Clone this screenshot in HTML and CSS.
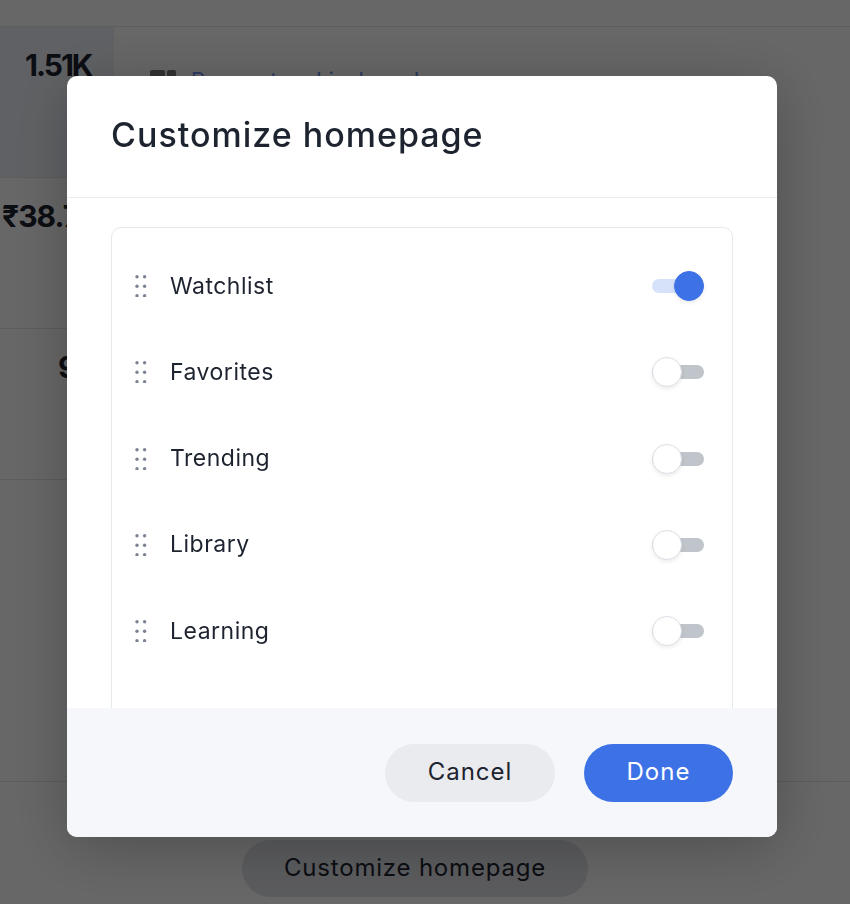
FILE: index.html
```html
<!DOCTYPE html>
<html lang="en">
<head>
    <meta charset="UTF-8">
    <meta name="viewport" content="width=device-width, initial-scale=1.0">
    <title>Customize homepage</title>
    <link rel="stylesheet" href="styles.css">
</head>
<body>
    <!-- Page behind the dialog -->
    <div class="page">
        <div class="topbar"></div>
        <div class="content">
            <div class="stats">
                <div class="stat stat-active"><span class="num num-a">1.51K</span></div>
                <div class="stat"><span class="num num-b">₹38.76M</span></div>
                <div class="stat"><span class="num num-c">9.2K</span></div>
            </div>
            <div class="list">
                <a class="link" href="#">
                    <svg class="link-icon" width="26" height="20" viewBox="0 0 26 20">
                        <rect x="0" y="0" width="15" height="20" rx="2" fill="#7a7c80"/>
                        <rect x="17" y="0" width="9" height="20" rx="2" fill="#7a7c80"/>
                    </svg>
                    Parameters Liveboard
                </a>
            </div>
        </div>
        <div class="page-footer">
            <button class="page-btn">Customize homepage</button>
        </div>
    </div>

    <!-- Dialog -->
    <div class="overlay">
        <div class="modal">
            <div class="modal-header">
                <h2>Customize homepage</h2>
            </div>
            <div class="modal-body">
                <div class="sections">
                    <div class="row">
                        <svg class="handle" width="12" height="22" viewBox="0 0 12 22"><g fill="#7b8291"><circle cx="2" cy="1.7" r="1.7"/><circle cx="9.6" cy="1.7" r="1.7"/><circle cx="2" cy="11.2" r="1.7"/><circle cx="9.6" cy="11.2" r="1.7"/><circle cx="2" cy="20.7" r="1.7"/><circle cx="9.6" cy="20.7" r="1.7"/></g></svg>
                        <span class="label">Watchlist</span>
                        <span class="toggle on"><span class="knob"></span></span>
                    </div>
                    <div class="row">
                        <svg class="handle" width="12" height="22" viewBox="0 0 12 22"><g fill="#7b8291"><circle cx="2" cy="1.7" r="1.7"/><circle cx="9.6" cy="1.7" r="1.7"/><circle cx="2" cy="11.2" r="1.7"/><circle cx="9.6" cy="11.2" r="1.7"/><circle cx="2" cy="20.7" r="1.7"/><circle cx="9.6" cy="20.7" r="1.7"/></g></svg>
                        <span class="label">Favorites</span>
                        <span class="toggle"><span class="knob"></span></span>
                    </div>
                    <div class="row">
                        <svg class="handle" width="12" height="22" viewBox="0 0 12 22"><g fill="#7b8291"><circle cx="2" cy="1.7" r="1.7"/><circle cx="9.6" cy="1.7" r="1.7"/><circle cx="2" cy="11.2" r="1.7"/><circle cx="9.6" cy="11.2" r="1.7"/><circle cx="2" cy="20.7" r="1.7"/><circle cx="9.6" cy="20.7" r="1.7"/></g></svg>
                        <span class="label">Trending</span>
                        <span class="toggle"><span class="knob"></span></span>
                    </div>
                    <div class="row">
                        <svg class="handle" width="12" height="22" viewBox="0 0 12 22"><g fill="#7b8291"><circle cx="2" cy="1.7" r="1.7"/><circle cx="9.6" cy="1.7" r="1.7"/><circle cx="2" cy="11.2" r="1.7"/><circle cx="9.6" cy="11.2" r="1.7"/><circle cx="2" cy="20.7" r="1.7"/><circle cx="9.6" cy="20.7" r="1.7"/></g></svg>
                        <span class="label">Library</span>
                        <span class="toggle"><span class="knob"></span></span>
                    </div>
                    <div class="row">
                        <svg class="handle" width="12" height="22" viewBox="0 0 12 22"><g fill="#7b8291"><circle cx="2" cy="1.7" r="1.7"/><circle cx="9.6" cy="1.7" r="1.7"/><circle cx="2" cy="11.2" r="1.7"/><circle cx="9.6" cy="11.2" r="1.7"/><circle cx="2" cy="20.7" r="1.7"/><circle cx="9.6" cy="20.7" r="1.7"/></g></svg>
                        <span class="label">Learning</span>
                        <span class="toggle"><span class="knob"></span></span>
                    </div>
                </div>
            </div>
            <div class="modal-footer">
                <button class="btn btn-secondary">Cancel</button>
                <button class="btn btn-primary">Done</button>
            </div>
        </div>
    </div>
</body>
</html>
```

FILE: styles.css
```css
/* General Styling */
* {
    margin: 0;
    padding: 0;
    box-sizing: border-box;
}

body {
    font-family: Inter, 'Noto Sans', sans-serif;
    background: #fff;
    color: #1d232f;
    width: 850px;
    height: 904px;
    overflow: hidden;
}

/* Background page */
.page {
    display: flex;
    flex-direction: column;
    height: 904px;
}

.topbar {
    height: 27px;
    border-bottom: 1px solid #e4e5e8;
}

.content {
    display: flex;
    flex: 1;
    border-bottom: 1px solid #e4e5e8;
}

.stats {
    width: 114px;
    display: flex;
    flex-direction: column;
}

.stat {
    height: 151px;
    width: 200px;
    border-bottom: 1px solid #e4e5e8;
    padding-top: 20px;
    font-size: 30px;
    font-weight: 700;
    letter-spacing: -2px;
    white-space: nowrap;
}

.stat-active {
    width: 114px;
    background: #eef1f8;
}

.num { display: block; }
.num-a { padding-left: 25px; }
.num-b { padding-left: 2px; letter-spacing: -1px; }
.num-c { padding-left: 58px; }

.list {
    padding: 40px 0 0 36px;
}

.link {
    display: flex;
    align-items: center;
    gap: 15px;
    color: #6c8ff0;
    font-size: 22px;
    text-decoration: underline;
}

.page-footer {
    height: 122px;
    display: flex;
    justify-content: center;
    padding: 58px 20px 0 0;
}

.page-btn {
    width: 346px;
    height: 57px;
    border: none;
    border-radius: 29px;
    background: #e2e4e9;
    color: #1d232f;
    font-family: inherit;
    font-size: 24px;
    letter-spacing: 0.8px;
    padding-bottom: 2px;
}

/* Dialog */
.overlay {
    position: fixed;
    inset: 0;
    background: rgba(0, 0, 0, 0.595);
    padding: 76px 0 0 67px;
}

.modal {
    width: 710px;
    height: 761px;
    background: #fff;
    border-radius: 10px;
    overflow: hidden;
    display: flex;
    flex-direction: column;
    box-shadow: 0 10px 60px rgba(0, 0, 0, 0.25);
}

.modal-header {
    height: 122px;
    padding: 38px 44px 0;
    border-bottom: 1px solid #e9ebef;
}

.modal-header h2 {
    font-size: 34px;
    font-weight: 500;
    letter-spacing: 1px;
    color: #1d232f;
}

.modal-body {
    flex: 1;
    overflow: hidden;
    padding: 29px 44px 0;
}

.sections {
    border: 1px solid #e6e8ee;
    border-radius: 10px;
    padding: 15px 28px 80px 23px;
}

.row {
    height: 86.25px;
    display: flex;
    align-items: center;
}

.handle {
    flex: none;
}

.label {
    flex: 1;
    margin-left: 23px;
    font-size: 23px;
    letter-spacing: 0.5px;
    color: #1d232f;
    padding-bottom: 1px;
}

.toggle {
    position: relative;
    width: 52px;
    height: 14px;
    border-radius: 7px;
    background: #c0c4cb;
}

.knob {
    position: absolute;
    top: -8px;
    left: 0;
    width: 30px;
    height: 30px;
    border-radius: 50%;
    background: #fff;
    border: 1px solid #dcdfe6;
    box-shadow: 0 2px 4px rgba(0, 0, 0, 0.08);
}

.toggle.on {
    background: #d6e1fa;
}

.toggle.on .knob {
    left: 22px;
    background: #3d72e7;
    border-color: #3d72e7;
}

.modal-footer {
    height: 129px;
    background: #f5f7fa;
    display: flex;
    align-items: center;
    justify-content: flex-end;
    gap: 29px;
    padding: 1px 44px 0;
}

.btn {
    height: 58px;
    border: none;
    border-radius: 29px;
    font-family: inherit;
    font-size: 24px;
    letter-spacing: 1px;
    padding-bottom: 3px;
    cursor: pointer;
}

.btn-secondary {
    width: 170px;
    background: #eaebef;
    color: #1d232f;
}

.btn-primary {
    width: 149px;
    background: #3d72e7;
    color: #fff;
}
```
